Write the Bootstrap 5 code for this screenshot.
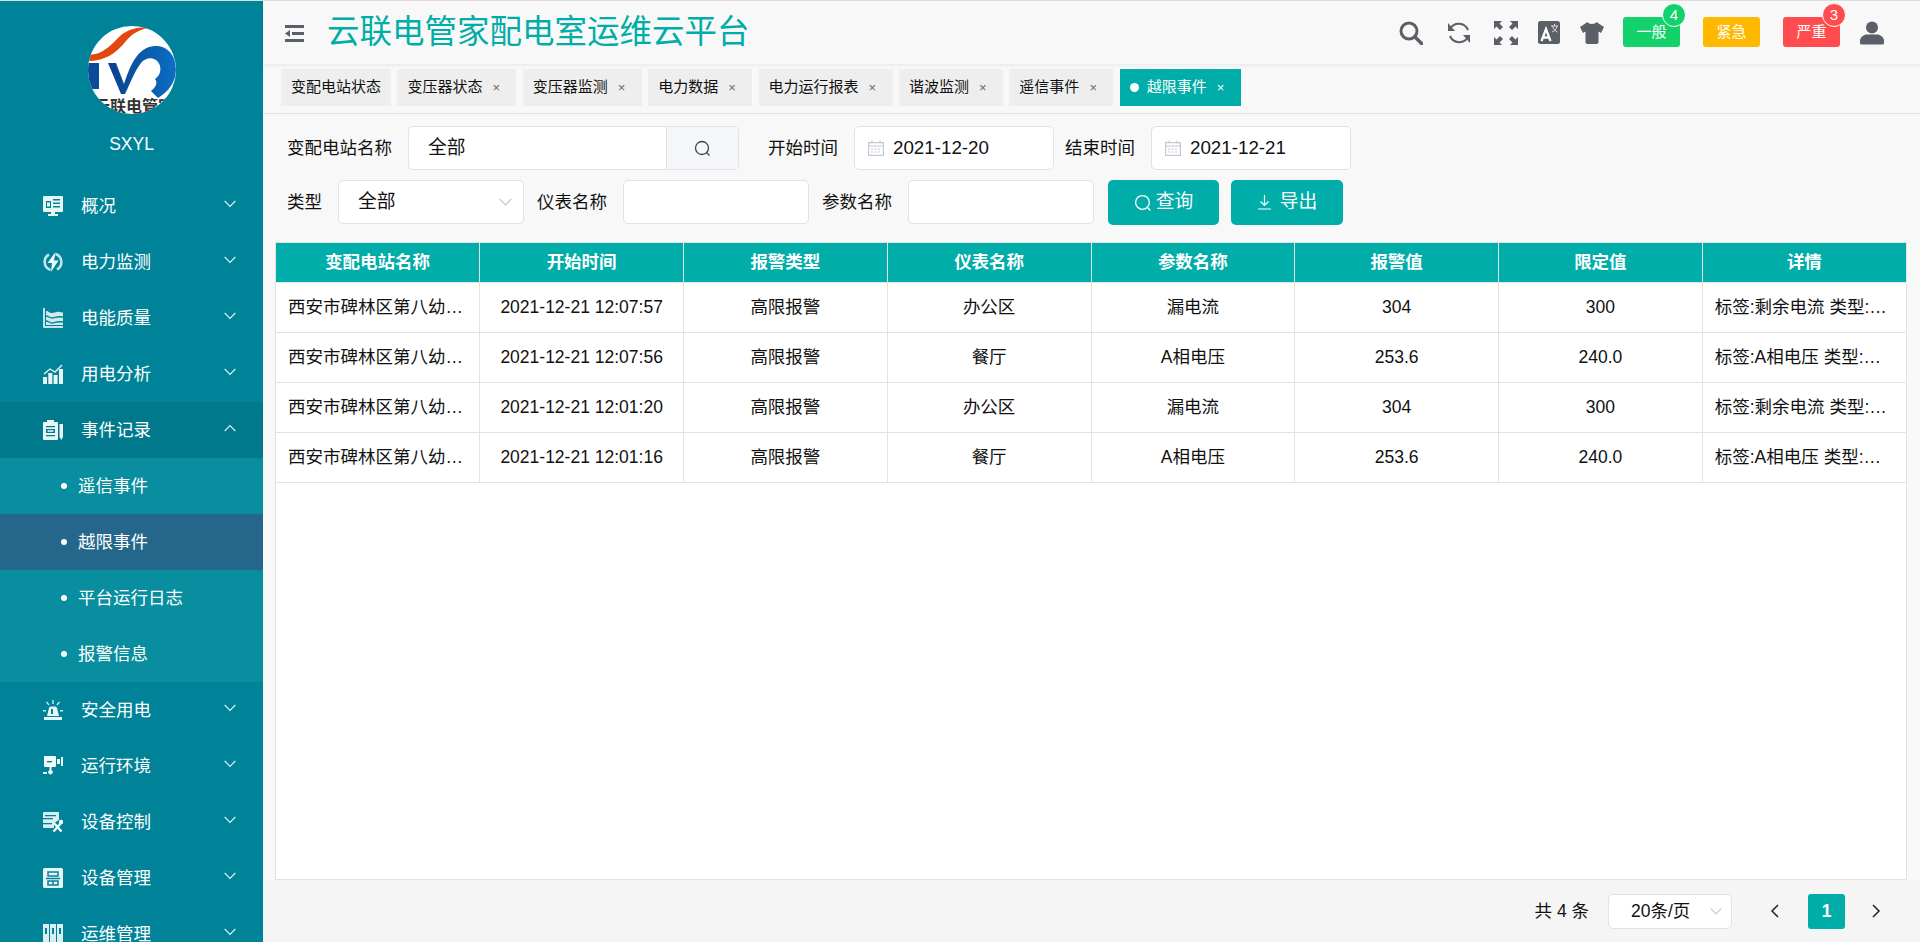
<!DOCTYPE html>
<html lang="zh-CN">
<head>
<meta charset="utf-8">
<title>云联电管家配电室运维云平台</title>
<link href="https://cdn.jsdelivr.net/npm/bootstrap@5.3.0/dist/css/bootstrap.min.css" rel="stylesheet">
<style>
html,body{height:100%;overflow:hidden}
body{font-family:"Liberation Sans","Noto Sans CJK SC",sans-serif;font-size:17.5px;color:#111;background:#f8f8f8;border-top:1px solid #ddd}
.shell{height:941px;overflow:hidden}
.side{width:263px;background:#008398;color:#fff;overflow:hidden}
.brand{height:177px;padding-top:25px;flex:none}
.logo-svg{width:88px;height:88px;display:block}
.brand-name{font-size:17.5px;margin-top:20px;line-height:20px}
.mitem{height:56px;padding-left:43px;padding-right:27px;flex:none}
.mitem .mico{width:20px;height:20px;flex:none;margin-right:18px}
.mitem .chev{width:12px;height:8px;margin-left:auto;margin-top:-5px;flex:none}
.mitem.open{background:#00798c}
.subwrap{background:#088e9e;flex:none}
.subitem{height:56px;padding-left:61px}
.subitem.cur{background:#24678a}
.subitem i{width:6px;height:6px;border-radius:50%;background:#fff;margin-right:11px;flex:none}
.main{min-width:0}
.topbar{height:63px;background:#f8f8f8;box-shadow:0 1px 4px rgba(0,0,0,.08);padding-left:22px;position:relative;flex:none}
.burger{width:19px;height:17px;margin-right:23px;margin-top:2px}
.ttl{font-size:32.5px;color:#00ada8;line-height:1}
.tools{margin-left:auto;padding-right:36px}
.tool{width:24px;height:24px;display:block;flex:none}
.m18{margin-left:18px}.m19{margin-left:19px}.m20{margin-left:20px}.m23{margin-left:23px}.m24{margin-left:24px}
.alarm{width:57px;height:30px;border-radius:3px;color:#fff;font-size:15px;position:relative;margin-top:-1px}
.al-g{background:#13d16b}.al-y{background:#ffb800}.al-r{background:#ff4d4f}
.pip{position:absolute;top:-14px;right:-6px;width:24px;height:24px;border-radius:50%;border:1px solid #fff;color:#fff;font-size:15px;line-height:22px;text-align:center}
.tabbar{height:50px;border-bottom:1px solid #e2e2e2;padding:5px 0 0 18px;gap:6.400px;flex:none}
.tabi{height:37px;background:#eee;font-size:15px;padding:0 10px;white-space:nowrap}
.tabi .xx{font-size:13px;color:#666;margin-left:10px;margin-right:6.400px}
.tabi.on{background:#00ada8;color:#fff}
.tabi.on .xx{color:#fff}
.tabi.on .dot{width:9px;height:9px;background:#fff;border-radius:50%;margin-right:8px}
.filters{padding:12px 0 0 24px;flex:none}
.frow{height:44px}
.frow+.frow{margin-top:10px}
.lbl{white-space:nowrap;line-height:44px}
.fbox{height:44px;background:#fff;border:1px solid #e2e2e6;border-radius:5px;padding:0 19px;flex:none;font-size:18.750px;margin-left:16px}
.fbox svg{flex:none}
.f-station{width:331px;padding:0;overflow:hidden}
.f-station .val{flex:1;padding-left:19px}
.f-station .srch{width:72px;height:100%;background:#f4f6fa;border-left:1px solid #e2e2e6}
.f-date{width:200px;padding-left:13px}
.f-date svg{margin-right:9px}
.f-type{width:186px}
.f-type svg{margin-left:auto;margin-right:-8px}
.f-in{width:186px}
.act{background:#00ada8;border:0;color:#fff;height:45px;width:111px;border-radius:5px;font-size:18.750px;padding:0}
.act:hover{background:#00ada8;color:#fff}
.act-a{margin-left:14px}
.act-b{margin-left:12px;width:112px}
.lbl-s1{margin-left:29px}
.lbl-s2{margin-left:11px}
.lbl-s3{margin-left:13px}
.tblwrap{margin:18px 13px 0 12px;height:638px;background:#fff;border:1px solid #e2e2e2;border-top:0;flex:none}
.dtable{table-layout:fixed;width:100%;margin:0;font-size:17.5px;border-collapse:collapse}
.dtable th{background:#00ada8;color:#fff;height:40px;padding:0 12px;text-align:center;font-weight:700;border:1px solid #e0e6e6;border-top:1px solid #e2e2e2;vertical-align:middle}
.dtable td{height:50px;padding:0 12px;text-align:center;border:1px solid #e2e2e2;vertical-align:middle;white-space:nowrap;overflow:hidden;text-overflow:ellipsis;background:#fff;color:#111}
.dtable td.lft{text-align:left}
.dtable th:first-child,.dtable td:first-child{border-left:0}
.dtable th:last-child,.dtable td:last-child{border-right:0}
.pager{height:62px;background:#f5f5f5;padding-right:38px;flex:none}
.cnt{white-space:nowrap}
.f-size{width:124px;height:35px;margin-left:19px;padding:0 9px 0 22px;white-space:nowrap;font-size:17.5px}
.f-size svg{margin-left:auto}
.pg-arrow{width:12px;height:16px;flex:none}
.pg-on{width:37px;height:35px;background:#00ada8;color:#fff;font-weight:700;border-radius:3px}
.ms-pg1{margin-left:37px;margin-right:27px}
.ms-pg2{margin-left:25px}
</style>
</head>
<body>
<div class="d-flex shell">
  <aside class="side d-flex flex-column flex-shrink-0">
    <div class="brand d-flex flex-column align-items-center">
      <svg class="logo-svg" viewBox="0 0 88 88">
        <defs>
          <clipPath id="lc"><circle cx="44" cy="44" r="44"/></clipPath>
          <linearGradient id="lb" x1="0" x2="1" y1="0" y2="0"><stop offset="0" stop-color="#0c3f8e"/><stop offset="1" stop-color="#0a70c4"/></linearGradient>
        </defs>
        <g clip-path="url(#lc)">
          <rect width="88" height="88" fill="#fff"/>
          <path d="M0 29C14 29 22 20 32 10 40 3 50 1 60 1V2C50 4 44 8 38 15 28 28 16 35 0 35Z" fill="#e2470f"/>
          <rect x="0" y="37" width="11" height="26" fill="#0c4a9a"/>
          <path d="M20 37H28L36 58C41 44 48 20 68 20 80 20 88 30 88 44 88 56 80 66 70 72L63 65C68 61 70 57 67 53 73 49 74 41 70 36 66 31 58 31 53 37 46 46 42 58 37 68H33Z" fill="url(#lb)"/>
          <text x="46" y="86" text-anchor="middle" font-size="16" font-weight="700" fill="#333" font-family="Noto Sans CJK SC,sans-serif">云联电管家</text>
        </g>
      </svg>
      <div class="brand-name">SXYL</div>
    </div>
    <div class="mitem d-flex align-items-center">
      <svg class="mico" viewBox="0 0 20 20"><path fill="#e8f5f7" d="M1 0h18a1 1 0 0 1 1 1v14a1 1 0 0 1-1 1h-7v2h3v2H5v-2h3v-2H1a1 1 0 0 1-1-1V1a1 1 0 0 1 1-1Z"/><path fill="#008398" d="M3 5h5v7H3zM10 3h7v1.500h-7zM10 6.500h7V8h-7zM10 10h7v1.500h-7z"/><path fill="#e8f5f7" d="M4 6.500h3v4H4z"/></svg>
      <span>概况</span><svg class="chev" viewBox="0 0 12 8"><path d="M.7 1 6 6.300 11.300 1" fill="none" stroke="#d6eef1" stroke-width="1.200"/></svg>
    </div>
    <div class="mitem d-flex align-items-center">
      <svg class="mico" viewBox="0 0 20 20"><path fill="none" stroke="#c4e3e8" stroke-width="2.600" d="M6 2.500a8.500 8.500 0 0 0 1.500 15.500M14 17.500a8.500 8.500 0 0 0-1.500-15.500"/><path fill="#f1fafb" d="M12.500 0 4.500 11H9l-1 9 7.500-11.500H11Z"/></svg>
      <span>电力监测</span><svg class="chev" viewBox="0 0 12 8"><path d="M.7 1 6 6.300 11.300 1" fill="none" stroke="#d6eef1" stroke-width="1.200"/></svg>
    </div>
    <div class="mitem d-flex align-items-center">
      <svg class="mico" viewBox="0 0 20 20"><path fill="#c4e3e8" d="M0 0h2v18h18v2H1a1 1 0 0 1-1-1Z"/><path fill="#cfe8ec" d="M3 3c3 0 3 2 6 2s4-2 8-1 3 0 3 0v13H3Z"/><path fill="none" stroke="#008398" stroke-width="1.300" d="M3 8c3 0 3 2 6 2s5-2 11-1M3 13c3 0 3 2 6 2s5-2 11-1"/></svg>
      <span>电能质量</span><svg class="chev" viewBox="0 0 12 8"><path d="M.7 1 6 6.300 11.300 1" fill="none" stroke="#d6eef1" stroke-width="1.200"/></svg>
    </div>
    <div class="mitem d-flex align-items-center">
      <svg class="mico" viewBox="0 0 20 20"><path fill="#e8f5f7" d="M0 13h4v7H0zM5.300 9h4v11h-4zM10.600 11h4v9h-4zM16 5h4v15h-4z"/><path fill="none" stroke="#e8f5f7" stroke-width="1.400" d="M1 10l6-5 5 3 7-7"/></svg>
      <span>用电分析</span><svg class="chev" viewBox="0 0 12 8"><path d="M.7 1 6 6.300 11.300 1" fill="none" stroke="#d6eef1" stroke-width="1.200"/></svg>
    </div>
    <div class="mitem open d-flex align-items-center">
      <svg class="mico" viewBox="0 0 20 20"><path fill="#e8f5f7" d="M1 2h3V0h7v2h3a1 1 0 0 1 1 1v16a1 1 0 0 1-1 1H1a1 1 0 0 1-1-1V3a1 1 0 0 1 1-1ZM16.500 4H20v13l-1.700 3-1.800-3Z"/><path fill="#00798c" d="M3 6h9v1.300H3zM3 9h9v4H3zM3 15h9v1.300H3z"/><path fill="#e8f5f7" d="M4.500 10.200h6v1.600h-6z"/></svg>
      <span>事件记录</span><svg class="chev" viewBox="0 0 12 8"><path d="M.7 7 6 1.700 11.300 7" fill="none" stroke="#d6eef1" stroke-width="1.200"/></svg>
    </div>
    <div class="subwrap">
      <div class="subitem d-flex align-items-center"><i></i><span>遥信事件</span></div>
      <div class="subitem cur d-flex align-items-center"><i></i><span>越限事件</span></div>
      <div class="subitem d-flex align-items-center"><i></i><span>平台运行日志</span></div>
      <div class="subitem d-flex align-items-center"><i></i><span>报警信息</span></div>
    </div>
    <div class="mitem d-flex align-items-center">
      <svg class="mico" viewBox="0 0 20 20"><path fill="#e8f5f7" d="M1 17h18v3H1zM4 16l2-8a2 2 0 0 1 2-1.500h4A2 2 0 0 1 14 8l2 8Z"/><path fill="#008398" d="M8 9h2v5H8z"/><path fill="#cfe8ec" d="M9.300 0h1.400v4H9.300zM3 2.500l1-1 2.500 3-1 1zM17 2.500l-1-1-2.500 3 1 1zM0 10h3v1.400H0zM17 10h3v1.400h-3z"/></svg>
      <span>安全用电</span><svg class="chev" viewBox="0 0 12 8"><path d="M.7 1 6 6.300 11.300 1" fill="none" stroke="#d6eef1" stroke-width="1.200"/></svg>
    </div>
    <div class="mitem d-flex align-items-center">
      <svg class="mico" viewBox="0 0 20 20"><path fill="#f1fafb" d="M1 0h11a1 1 0 0 1 1 1v9a1 1 0 0 1-1 1H2a1 1 0 0 1-1-1ZM14 3h3v5h-3zM18 1h2v9h-2zM6.500 11h2v3.200a2.200 2.200 0 1 1-2 0ZM0 16h4v2H0z"/><path fill="#008398" d="M4 5h5v1.400H4z"/></svg>
      <span>运行环境</span><svg class="chev" viewBox="0 0 12 8"><path d="M.7 1 6 6.300 11.300 1" fill="none" stroke="#d6eef1" stroke-width="1.200"/></svg>
    </div>
    <div class="mitem d-flex align-items-center">
      <svg class="mico" viewBox="0 0 20 20"><path fill="#d9eef1" d="M1 0h14a1 1 0 0 1 1 1v7l-5 3v5H1a1 1 0 0 1-1-1V1a1 1 0 0 1 1-1Z"/><path fill="#008398" d="M2 3h11v1.200H2zM0 6h10v1.300H0zM0 11h9v1.300H0z"/><path fill="none" stroke="#f1fafb" stroke-width="2.400" d="M10.500 10.500l8 9M18.500 10.500l-8 9"/><circle cx="18" cy="10" r="2.200" fill="#f1fafb"/></svg>
      <span>设备控制</span><svg class="chev" viewBox="0 0 12 8"><path d="M.7 1 6 6.300 11.300 1" fill="none" stroke="#d6eef1" stroke-width="1.200"/></svg>
    </div>
    <div class="mitem d-flex align-items-center">
      <svg class="mico" viewBox="0 0 20 20"><rect width="20" height="20" rx="1.500" fill="#e8f5f7"/><path fill="none" stroke="#008398" stroke-width="1.500" d="M5 4h10v4H5zM3 10.500h14M5 13h10v4H5zM10 13v4"/></svg>
      <span>设备管理</span><svg class="chev" viewBox="0 0 12 8"><path d="M.7 1 6 6.300 11.300 1" fill="none" stroke="#d6eef1" stroke-width="1.200"/></svg>
    </div>
    <div class="mitem d-flex align-items-center">
      <svg class="mico" viewBox="0 0 20 20"><path fill="#d9eef1" d="M0 0h6v20H0zM7 0h6v20H7zM14 0h6v20h-6z"/><path fill="#008398" d="M2 4h2v6H2zM9 4h2v6H9zM16 4h2v6h-2z"/></svg>
      <span>运维管理</span><svg class="chev" viewBox="0 0 12 8"><path d="M.7 1 6 6.300 11.300 1" fill="none" stroke="#d6eef1" stroke-width="1.200"/></svg>
    </div>
  </aside>

  <main class="main flex-grow-1 d-flex flex-column">
    <header class="topbar d-flex align-items-center">
      <svg class="burger" viewBox="0 0 19 17"><path fill="#5b5f68" d="M0 0h19v3H0zM7 7h12v3H7zM0 14h19v3H0zM5 5v7L0 8.500Z"/></svg>
      <span class="ttl">云联电管家配电室运维云平台</span>
      <div class="tools d-flex align-items-center">
        <svg class="tool" viewBox="0 0 24 24"><circle cx="10" cy="10" r="8" fill="none" stroke="#5b5f68" stroke-width="3"/><path d="M16 16l7 7" stroke="#5b5f68" stroke-width="3.400" stroke-linecap="round"/></svg>
        <svg class="tool m24" viewBox="0 0 24 24"><path fill="none" stroke="#5b5f68" stroke-width="2" d="M3 8a10 10 0 0 1 18 1M21 16A10 10 0 0 1 3 15"/><path fill="#5b5f68" d="M1 2v8h7ZM23 22v-8h-7Z"/></svg>
        <svg class="tool m23" viewBox="0 0 24 24"><path fill="#5b5f68" d="M0 0h8L5.500 2.500 9 6 6 9 2.500 5.500 0 8ZM24 0v8l-2.500-2.500L18 9l-3-3 3.500-3.500L16 0ZM0 24v-8l2.500 2.500L6 15l3 3-3.500 3.500L8 24ZM24 24h-8l2.500-2.500L15 18l3-3 3.500 3.500L24 16Z"/></svg>
        <svg class="tool m20" viewBox="0 0 24 24"><rect width="22" height="23" rx="2.500" fill="#5b5f68"/><path fill="none" stroke="#fff" stroke-width="2.300" d="M3.500 20 8 8l4.500 12M5 16.500h6"/><path fill="none" stroke="#ddd" stroke-width="1" d="M13 5h7M16.500 3v2M14.500 5c.5 3 3 5 5 6M19 5c-.5 3-2.500 5-5 6"/></svg>
        <svg class="tool m18" viewBox="0 0 24 24"><path fill="#5b5f68" d="M7.500 1c1 2.500 8 2.500 9 0L24 6l-3 6-2.500-1.500V21a2 2 0 0 1-2 2h-9a2 2 0 0 1-2-2V10.500L3 12 0 6Z"/></svg>
        <div class="alarm al-g m19 d-flex align-items-center justify-content-center"><span>一般</span><span class="pip al-g">4</span></div>
        <div class="alarm al-y m23 d-flex align-items-center justify-content-center"><span>紧急</span></div>
        <div class="alarm al-r m23 d-flex align-items-center justify-content-center"><span>严重</span><span class="pip al-r">3</span></div>
        <svg class="tool m20" viewBox="0 0 24 24"><circle cx="12" cy="6.500" r="6" fill="#5b5f68"/><path fill="#5b5f68" d="M0 22v-2c0-4 4-6.500 7-6.500h10c3 0 7 2.500 7 6.500v2a1.500 1.500 0 0 1-1.500 1.500h-21A1.500 1.500 0 0 1 0 22Z"/></svg>
      </div>
    </header>

    <nav class="tabbar d-flex">
      <div class="tabi d-flex align-items-center">变配电站状态</div>
      <div class="tabi d-flex align-items-center">变压器状态<span class="xx">×</span></div>
      <div class="tabi d-flex align-items-center">变压器监测<span class="xx">×</span></div>
      <div class="tabi d-flex align-items-center">电力数据<span class="xx">×</span></div>
      <div class="tabi d-flex align-items-center">电力运行报表<span class="xx">×</span></div>
      <div class="tabi d-flex align-items-center">谐波监测<span class="xx">×</span></div>
      <div class="tabi d-flex align-items-center">遥信事件<span class="xx">×</span></div>
      <div class="tabi on d-flex align-items-center"><span class="dot"></span>越限事件<span class="xx">×</span></div>
    </nav>

    <section class="filters">
      <div class="frow d-flex">
        <span class="lbl">变配电站名称</span>
        <div class="fbox f-station d-flex align-items-center">
          <span class="val">全部</span>
          <span class="srch d-flex align-items-center justify-content-center"><svg width="17" height="17" viewBox="0 0 17 17"><circle cx="8" cy="8" r="6.500" fill="none" stroke="#444" stroke-width="1.300"/><path d="M12.500 12.500l3 3" stroke="#444" stroke-width="1.300"/></svg></span>
        </div>
        <span class="lbl lbl-s1">开始时间</span>
        <div class="fbox f-date d-flex align-items-center">
          <svg width="16" height="16" viewBox="0 0 16 16"><path fill="none" stroke="#c5c8d6" stroke-width="1.200" d="M.6 2.600h14.800v12.800H.6zM.6 6h14.800M4 .5v3M12 .5v3"/><path stroke="#c5c8d6" stroke-width="1.200" stroke-dasharray="2 1.500" d="M3 9h10M3 12h10"/></svg>
          <span>2021-12-20</span>
        </div>
        <span class="lbl lbl-s2">结束时间</span>
        <div class="fbox f-date d-flex align-items-center">
          <svg width="16" height="16" viewBox="0 0 16 16"><path fill="none" stroke="#c5c8d6" stroke-width="1.200" d="M.6 2.600h14.800v12.800H.6zM.6 6h14.800M4 .5v3M12 .5v3"/><path stroke="#c5c8d6" stroke-width="1.200" stroke-dasharray="2 1.500" d="M3 9h10M3 12h10"/></svg>
          <span>2021-12-21</span>
        </div>
      </div>
      <div class="frow d-flex">
        <span class="lbl">类型</span>
        <div class="fbox f-type d-flex align-items-center">
          <span>全部</span>
          <svg width="13" height="8" viewBox="0 0 13 8"><path d="M.7 1 6.500 6.800 12.300 1" fill="none" stroke="#c5c8d6" stroke-width="1.200"/></svg>
        </div>
        <span class="lbl lbl-s3">仪表名称</span>
        <div class="fbox f-in"></div>
        <span class="lbl lbl-s3">参数名称</span>
        <div class="fbox f-in"></div>
        <button type="button" class="btn act act-a d-flex align-items-center justify-content-center gap-1"><svg width="18" height="18" viewBox="0 0 17 17"><circle cx="8" cy="8" r="6.500" fill="none" stroke="#fff" stroke-width="1.300"/><path d="M12.500 12.500l3 3" stroke="#fff" stroke-width="1.300"/></svg>查询</button>
        <button type="button" class="btn act act-b d-flex align-items-center justify-content-center gap-2"><svg width="15" height="15" viewBox="0 0 15 15"><path fill="none" stroke="#fff" stroke-width="1.200" d="M7.500 0v10M3.500 6.500l4 4 4-4M1 14h13"/></svg>导出</button>
      </div>
    </section>

    <section class="tblwrap">
      <table class="dtable">
        <thead><tr><th>变配电站名称</th><th>开始时间</th><th>报警类型</th><th>仪表名称</th><th>参数名称</th><th>报警值</th><th>限定值</th><th>详情</th></tr></thead>
        <tbody>
          <tr><td class="lft">西安市碑林区第八幼儿园配电室</td><td>2021-12-21 12:07:57</td><td>高限报警</td><td>办公区</td><td>漏电流</td><td>304</td><td>300</td><td class="lft">标签:剩余电流 类型:高限报警</td></tr>
          <tr><td class="lft">西安市碑林区第八幼儿园配电室</td><td>2021-12-21 12:07:56</td><td>高限报警</td><td>餐厅</td><td>A相电压</td><td>253.6</td><td>240.0</td><td class="lft">标签:A相电压 类型:高限报警</td></tr>
          <tr><td class="lft">西安市碑林区第八幼儿园配电室</td><td>2021-12-21 12:01:20</td><td>高限报警</td><td>办公区</td><td>漏电流</td><td>304</td><td>300</td><td class="lft">标签:剩余电流 类型:高限报警</td></tr>
          <tr><td class="lft">西安市碑林区第八幼儿园配电室</td><td>2021-12-21 12:01:16</td><td>高限报警</td><td>餐厅</td><td>A相电压</td><td>253.6</td><td>240.0</td><td class="lft">标签:A相电压 类型:高限报警</td></tr>
        </tbody>
      </table>
    </section>

    <footer class="pager d-flex align-items-center justify-content-end">
      <span class="cnt">共 4 条</span>
      <div class="fbox f-size d-flex align-items-center"><span>20条/页</span><svg width="12" height="7" viewBox="0 0 12 7"><path d="M.7.7 6 6 11.300.7" fill="none" stroke="#c5c8d6" stroke-width="1.200"/></svg></div>
      <svg class="pg-arrow ms-pg1" viewBox="0 0 12 16"><path d="M9 2 3 8l6 6" fill="none" stroke="#222" stroke-width="1.500"/></svg>
      <span class="pg-on d-flex align-items-center justify-content-center">1</span>
      <svg class="pg-arrow ms-pg2" viewBox="0 0 12 16"><path d="M3 2l6 6-6 6" fill="none" stroke="#222" stroke-width="1.500"/></svg>
    </footer>
  </main>
</div>
<script src="https://cdn.jsdelivr.net/npm/bootstrap@5.3.0/dist/js/bootstrap.bundle.min.js"></script>
</body>
</html>
